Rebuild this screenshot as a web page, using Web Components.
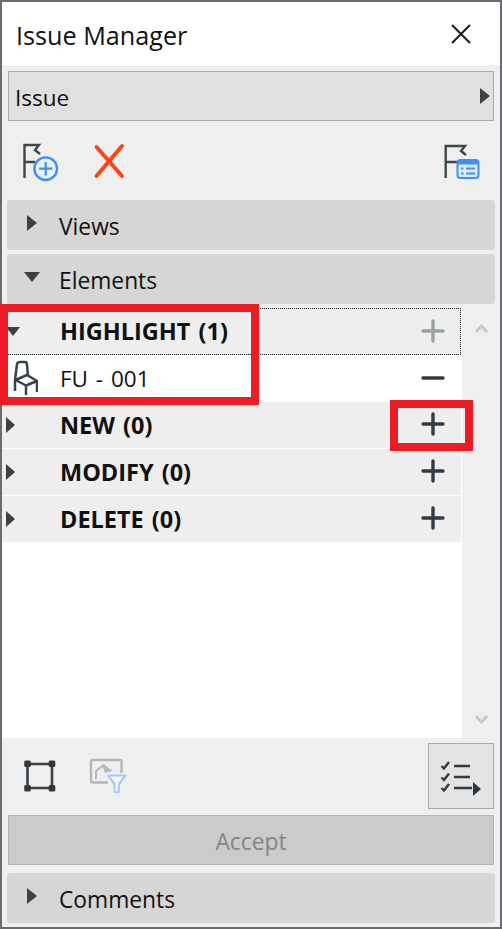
<!DOCTYPE html>
<html>
<head>
<meta charset="utf-8">
<title>Issue Manager</title>
<style>
	html, body { margin: 0; padding: 0; }
	body { width: 502px; height: 929px; overflow: hidden; font-family: "Open Sans", "Noto Sans", sans-serif; color: #111; }
</style>
</head>
<body>

<im-panel>
	<im-title>Issue Manager</im-title>
	<im-dropdown>Issue</im-dropdown>
	<im-toolbar>
		<svg slot="left" width="44" height="44" viewBox="20 138 44 44" fill="none">
			<path d="M24.500 177V144H39L35 149L40 153M24.500 161H35" stroke="#3c474d" stroke-width="2.400"/>
			<circle cx="45.700" cy="167.700" r="11.300" fill="#efefef" stroke="#3f8ff5" stroke-width="2.400"/>
			<path d="M45.700 161V174.400M39 167.700H52.400" stroke="#3f8ff5" stroke-width="2.200"/>
		</svg>
		<svg slot="left" width="44" height="44" viewBox="87 139 44 44" fill="none">
			<path d="M96.500 147L122 176" stroke="#ff4415" stroke-width="4" stroke-linecap="round"/>
			<path d="M122 146L96.500 176" stroke="#ff4415" stroke-width="4" stroke-linecap="round"/>
		</svg>
		<svg slot="right" width="44" height="44" viewBox="440 138 44 44" fill="none">
			<path d="M445.700 177V145H465L461 150L466 154M445.700 161H458" stroke="#3c474d" stroke-width="2.400"/>
			<rect x="457.500" y="159" width="21" height="18" rx="3" fill="#dcebff" stroke="#3f8ff5" stroke-width="2"/>
			<path d="M457.500 162a3 3 0 0 1 3-3h15a3 3 0 0 1 3 3v1.500h-21z" fill="#3f8ff5"/>
			<path d="M461 167.500h2.500M466 167.500h9M461 172.500h2.500M466 172.500h9" stroke="#3f8ff5" stroke-width="2"/>
		</svg>
	</im-toolbar>
	<im-section>Views</im-section>
	<im-section open>Elements</im-section>
	<im-list>
		<im-row kind="group" focused open action="plus-dim">HIGHLIGHT (1)</im-row>
		<im-row kind="item" action="minus">
			<svg slot="icon" width="30" height="40" viewBox="8 358 30 40" fill="none" stroke="#36434a" stroke-width="2.500" stroke-linejoin="round">
				<path d="M15 379L17 363Q17.500 361 20 361H25Q27 361 27 364L28 375"/>
				<path d="M15.500 379L27 374L37 380L26 384.500Z"/>
				<path d="M15 379V390M37 380V391M26 384.500V394"/>
			</svg>
			FU - 001
		</im-row>
		<im-row kind="group" action="plus">NEW (0)</im-row>
		<im-row kind="group" action="plus">MODIFY (0)</im-row>
		<im-row kind="group" action="plus">DELETE (0)</im-row>
	</im-list>
	<im-bottombar>
		<svg slot="left" width="44" height="44" viewBox="18 754 44 44" fill="none">
			<path d="M27.500 764H52V788H27.500Z" stroke="#37434a" stroke-width="2.600"/>
			<g fill="#2f3a40">
				<rect x="24.200" y="760.500" width="6.600" height="6.600" rx="1.500"/>
				<rect x="48.700" y="760.500" width="6.600" height="6.600" rx="1.500"/>
				<rect x="24.200" y="785" width="6.600" height="6.600" rx="1.500"/>
				<rect x="48.700" y="785" width="6.600" height="6.600" rx="1.500"/>
			</g>
		</svg>
		<svg slot="left" width="44" height="44" viewBox="86 754 44 44" fill="none">
			<path d="M108 782.500H92.500Q91 782.500 91 781V761.500Q91 760 92.500 760H120Q121.500 760 121.500 761.500V773" stroke="#b7b7b7" stroke-width="2.400"/>
			<path d="M96 779V771L103.500 765L110 771" stroke="#b7b7b7" stroke-width="2"/>
			<path d="M102 765L113 770.500L105 773Z" fill="#b7b7b7"/>
			<path d="M108 775.500H125.500L119 784V792H114.500V784Z" fill="#f2f6ff" stroke="#a9c9ff" stroke-width="2.200" stroke-linejoin="round"/>
		</svg>
		<im-iconbutton slot="right">
			<svg width="64" height="64" viewBox="429 744 64 64" fill="none" stroke="#2f3a40">
				<path d="M441.500 766L444 768.500L449 762M441.500 777.500L444 780L449 773.500M441.500 788L444 790.500L449 784" stroke-width="2.400"/>
				<path d="M454 766H470M454 777H470M454 788H472" stroke-width="2.600"/>
				<path d="M473 782L481 789L473 796Z" fill="#2f3a40" stroke="none"/>
			</svg>
		</im-iconbutton>
	</im-bottombar>
	<im-accept>Accept</im-accept>
	<im-section last>Comments</im-section>
</im-panel>

<im-callout style="left:0;top:304px;width:259px;height:101px"></im-callout>
<im-callout style="left:390px;top:400px;width:83px;height:51px"></im-callout>

<script>
	(function() {
		// every element is the same thing: some css, some markup, an open shadow root
		function define(name, css, html, extra) {
			class Elem extends HTMLElement {
				constructor() {
					super();
					const shadow = this.attachShadow({mode: 'open'});
					shadow.innerHTML = '<style>' + css + '</style>' + html;
				}
				connectedCallback() {
					if(extra) extra.call(this, this.shadowRoot);
				}
			}
			customElements.define(name, Elem);
		}

		const RIGHT = '<svg width="10" height="16" viewBox="0 0 10 16"><path d="M0 0L10 8L0 16Z" fill="#404040"/></svg>';
		const DOWN = '<svg width="16" height="10" viewBox="0 0 16 10"><path d="M0 0H16L8 10Z" fill="#404040"/></svg>';

		define('im-panel', `
			:host { display: flex; flex-direction: column; box-sizing: border-box; width: 502px; height: 929px; border: 2px solid #6a6a70; background: #efefef; }
		`, '<slot></slot>');

		define('im-title', `
			:host { display: flex; align-items: center; justify-content: space-between; flex: none; height: 63px; padding: 2px 29px 0 14px; box-sizing: border-box; background: #fff; font-size: 25.200px; color: #111; }
			svg { display: block; margin-top: -2px; }
		`, '<span><slot></slot></span><svg width="20" height="20" viewBox="0 0 20 20"><path d="M1 1L19 19M19 1L1 19" stroke="#1a1a1a" stroke-width="2" fill="none"/></svg>');

		define('im-dropdown', `
			:host { display: flex; align-items: center; justify-content: space-between; flex: none; box-sizing: border-box; height: 50px; margin: 6px 6px 0; padding: 2px 3px 0 6px; border: 1px solid #a9a9a9; background: #e0e0e0; font-size: 22.500px; }
			svg { display: block; margin-top: -2px; }
		`, '<span><slot></slot></span>' + RIGHT);

		define('im-toolbar', `
			:host { display: flex; align-items: center; justify-content: space-between; flex: none; height: 79px; padding: 0 16px 0 18px; box-sizing: border-box; }
			.left { display: flex; gap: 23px; }
			::slotted(svg) { display: block; }
		`, '<div class="left"><slot name="left"></slot></div><slot name="right"></slot>');

		define('im-section', `
			:host { display: flex; align-items: center; flex: none; box-sizing: border-box; height: 50px; margin: 0 5px 4px; border-radius: 3px; background: #d6d6d6; font-size: 22.800px; }
			:host([last]) { margin-top: 8px; margin-bottom: 0; }
			.arrow { display: flex; justify-content: center; width: 50px; margin-right: 2px; margin-top: -4px; }
			.text { padding-top: 2px; }
			svg { display: block; }
		`, '<span class="arrow"></span><span class="text"><slot></slot></span>', function(root) {
			root.querySelector('.arrow').innerHTML = this.hasAttribute('open') ? DOWN : RIGHT;
		});

		define('im-list', `
			:host { display: block; flex: none; box-sizing: border-box; height: 430px; padding-right: 39px; position: relative; background: linear-gradient(to right, #fff 460px, #efefef 460px); }
			.bar { position: absolute; right: 0; top: 0; bottom: 0; width: 38px; display: flex; flex-direction: column; justify-content: space-between; align-items: center; padding: 16px 0 14px; box-sizing: border-box; }
			svg { display: block; }
		`, `<slot></slot><div class="bar">
			<svg width="13" height="9" viewBox="0 0 13 9"><path d="M1 8L6.500 2L12 8" fill="none" stroke="#c6c6c6" stroke-width="2.600"/></svg>
			<svg width="13" height="9" viewBox="0 0 13 9"><path d="M1 1L6.500 7L12 1" fill="none" stroke="#c6c6c6" stroke-width="2.600"/></svg>
		</div>`);

		const ACTIONS = {
			'plus': '<path d="M2 12H22M12 2V22" stroke="#2f3c44"/>',
			'plus-dim': '<path d="M2 12H22M12 2V22" stroke="#9aa1a5"/>',
			'minus': '<path d="M2 12H22" stroke="#2f3c44"/>'
		};

		define('im-row', `
			:host { display: flex; align-items: center; box-sizing: border-box; height: 47px; position: relative; font-size: 22.500px; word-spacing: 2px; color: #111; }
			:host([kind=group]) { background: #eeeeee; font-weight: 700; font-size: 23.500px; border-bottom: 1px solid #fff; }
			:host([kind=item]) { background: #fff; }
			:host([focused]) { outline: 1px dotted #111; outline-offset: -1px; border-bottom: 0; }
			.lead { display: flex; align-items: center; justify-content: flex-start; flex: none; width: 58px; height: 100%; }
			.arrow { margin-left: 4px; }
			.text { flex: 1; }
			:host([kind=group]) .text { padding-bottom: 1px; }
			.action { flex: none; margin: 0 16px 2px 0; }
			svg { display: block; }
			::slotted(svg) { display: block; margin-left: 2px; }
		`, `<span class="lead"><span class="arrow"></span><slot name="icon"></slot></span>
			<span class="text"><slot></slot></span>
			<svg class="action" width="24" height="24" viewBox="0 0 24 24" fill="none" stroke-width="3.400" stroke-linecap="round"></svg>`, function(root) {
			root.querySelector('.action').innerHTML = ACTIONS[this.getAttribute('action')];
			if(this.getAttribute('kind') === 'group') {
				root.querySelector('.arrow').innerHTML = this.hasAttribute('open')
					? '<svg width="14" height="9" viewBox="0 0 14 9"><path d="M0 0H14L7 9Z" fill="#404040"/></svg>'
					: '<svg width="9" height="16" viewBox="0 0 9 16"><path d="M0 0L9 8L0 16Z" fill="#404040"/></svg>';
			}
		});

		define('im-bottombar', `
			:host { display: flex; align-items: flex-start; justify-content: space-between; flex: none; box-sizing: border-box; height: 77px; padding: 5px 6px 0 16px; }
			.left { display: flex; gap: 24px; padding-top: 11px; }
			::slotted(svg) { display: block; }
		`, '<div class="left"><slot name="left"></slot></div><slot name="right"></slot>');

		define('im-iconbutton', `
			:host { display: block; box-sizing: border-box; width: 66px; height: 66px; border: 1px solid #a9a9a9; background: #e4e4e4; }
			::slotted(svg) { display: block; }
		`, '<slot></slot>');

		define('im-accept', `
			:host { display: flex; align-items: center; justify-content: center; flex: none; box-sizing: border-box; height: 50px; margin: 0 6px; padding-top: 2px; border: 1px solid #b4b4b4; background: #cbcbcb; color: #858585; font-size: 22.800px; }
		`, '<slot></slot>');

		define('im-callout', `
			:host { display: block; position: absolute; box-sizing: border-box; border: 8px solid #ed1c24; pointer-events: none; }
		`, '');
	})();
</script>
</body>
</html>
